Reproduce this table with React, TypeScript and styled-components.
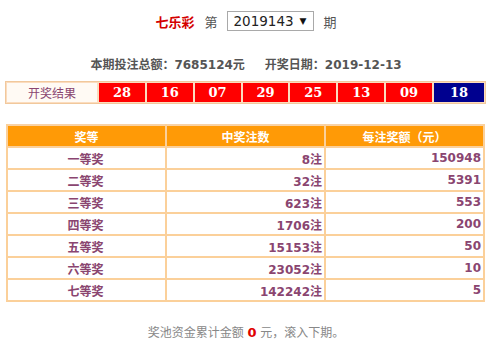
import React from "react";
import styled, { createGlobalStyle } from "styled-components";

const Global = createGlobalStyle`
  html, body { margin: 0; padding: 0; background: #fff; }
  body { font-family: "DejaVu Sans", "Noto Sans CJK SC", sans-serif; width: 492px; height: 344px; overflow: hidden; }
`;

const Page = styled.div`
  display: flex;
  flex-direction: column;
  width: 492px;
`;

const TitleRow = styled.div`
  display: flex;
  align-items: center;
  justify-content: center;
  gap: 10px;
  height: 20px;
  margin-top: 11px;
  font-size: 13px;
  color: #555;
`;

const Brand = styled.span`
  color: #d40000;
  font-weight: bold;
`;

const SelectBox = styled.div`
  display: flex;
  align-items: center;
  gap: 6px;
  height: 18px;
  padding: 0 6px 0 5px;
  border: 1px solid #a9a9a9;
  font-family: "DejaVu Sans", sans-serif;
  font-size: 13.5px;
  color: #222;
`;

const Arrow = styled.span`
  font-size: 9px;
  color: #111;
`;

const Stats = styled.div`
  display: flex;
  justify-content: center;
  gap: 20px;
  margin-top: 22px;
  height: 20px;
  align-items: center;
  font-size: 12px;
  font-weight: bold;
  color: #555;
`;

const Results = styled.div`
  display: grid;
  grid-template-columns: 90px repeat(7, 1fr) 50px;
  gap: 2px;
  margin: 8px 6px 0 5px;
  padding: 1px;
  border: 1px solid #f1c89c;
  background: #fbdcbe;
`;

const Cell = styled.div<{ $bg: string; $color: string }>`
  height: 19px;
  display: flex;
  align-items: center;
  justify-content: center;
  background: ${(p) => p.$bg};
  color: ${(p) => p.$color};
  font-size: 13px;
  font-weight: bold;
  font-family: "DejaVu Serif", "Noto Sans CJK SC", serif;
`;

const LabelCell = styled(Cell)`
  font-weight: normal;
  font-family: "DejaVu Sans", "Noto Sans CJK SC", sans-serif;
  font-size: 12px;
`;

const Table = styled.table`
  margin: 20px 7px 0 6px;
  width: 479px;
  border-collapse: collapse;
  table-layout: fixed;
  border: 2px solid #f8d2a6;
`;

const Th = styled.th`
  height: 20px;
  padding: 0;
  background: #ff9a06;
  color: #fff;
  font-size: 12px;
  font-weight: bold;
  border: 2px solid #fbd09a;
  border-top: none;
  border-bottom: 1px solid #fbd09a;
`;

const Td = styled.td<{ $align: "center" | "right" }>`
  height: 20px;
  padding: 0 2px 0 0;
  text-align: ${(p) => p.$align};
  color: #8a4570;
  font-size: 12px;
  font-weight: bold;
  border: 2px solid #fbd09a;
  white-space: nowrap;
`;

const Footer = styled.div`
  margin-top: 21px;
  text-align: center;
  font-size: 12px;
  color: #888;
`;

const Zero = styled.span`
  color: #e00000;
  font-weight: bold;
  font-size: 13px;
`;

const balls = ["28", "16", "07", "29", "25", "13", "09"];
const rows: [string, string, string][] = [
  ["一等奖", "8注", "150948"],
  ["二等奖", "32注", "5391"],
  ["三等奖", "623注", "553"],
  ["四等奖", "1706注", "200"],
  ["五等奖", "15153注", "50"],
  ["六等奖", "23052注", "10"],
  ["七等奖", "142242注", "5"],
];

export default function App() {
  return (
    <Page>
      <Global />
      <TitleRow>
        <Brand>七乐彩</Brand>
        <span>第</span>
        <SelectBox>
          <span>2019143</span>
          <Arrow>▼</Arrow>
        </SelectBox>
        <span>期</span>
      </TitleRow>
      <Stats>
        <span>本期投注总额：7685124元</span>
        <span>开奖日期：2019-12-13</span>
      </Stats>
      <Results>
        <LabelCell $bg="#fffaf4" $color="#8a4570">开奖结果</LabelCell>
        {balls.map((b, i) => (
          <Cell key={i} $bg="#ff0000" $color="#fff">{b}</Cell>
        ))}
        <Cell $bg="#00008f" $color="#fff">18</Cell>
      </Results>
      <Table>
        <thead>
          <tr>
            <Th>奖等</Th>
            <Th>中奖注数</Th>
            <Th>每注奖额（元）</Th>
          </tr>
        </thead>
        <tbody>
          {rows.map((r) => (
            <tr key={r[0]}>
              <Td $align="center">{r[0]}</Td>
              <Td $align="right">{r[1]}</Td>
              <Td $align="right">{r[2]}</Td>
            </tr>
          ))}
        </tbody>
      </Table>
      <Footer>
        奖池资金累计金额 <Zero>0</Zero> 元，滚入下期。
      </Footer>
    </Page>
  );
}
